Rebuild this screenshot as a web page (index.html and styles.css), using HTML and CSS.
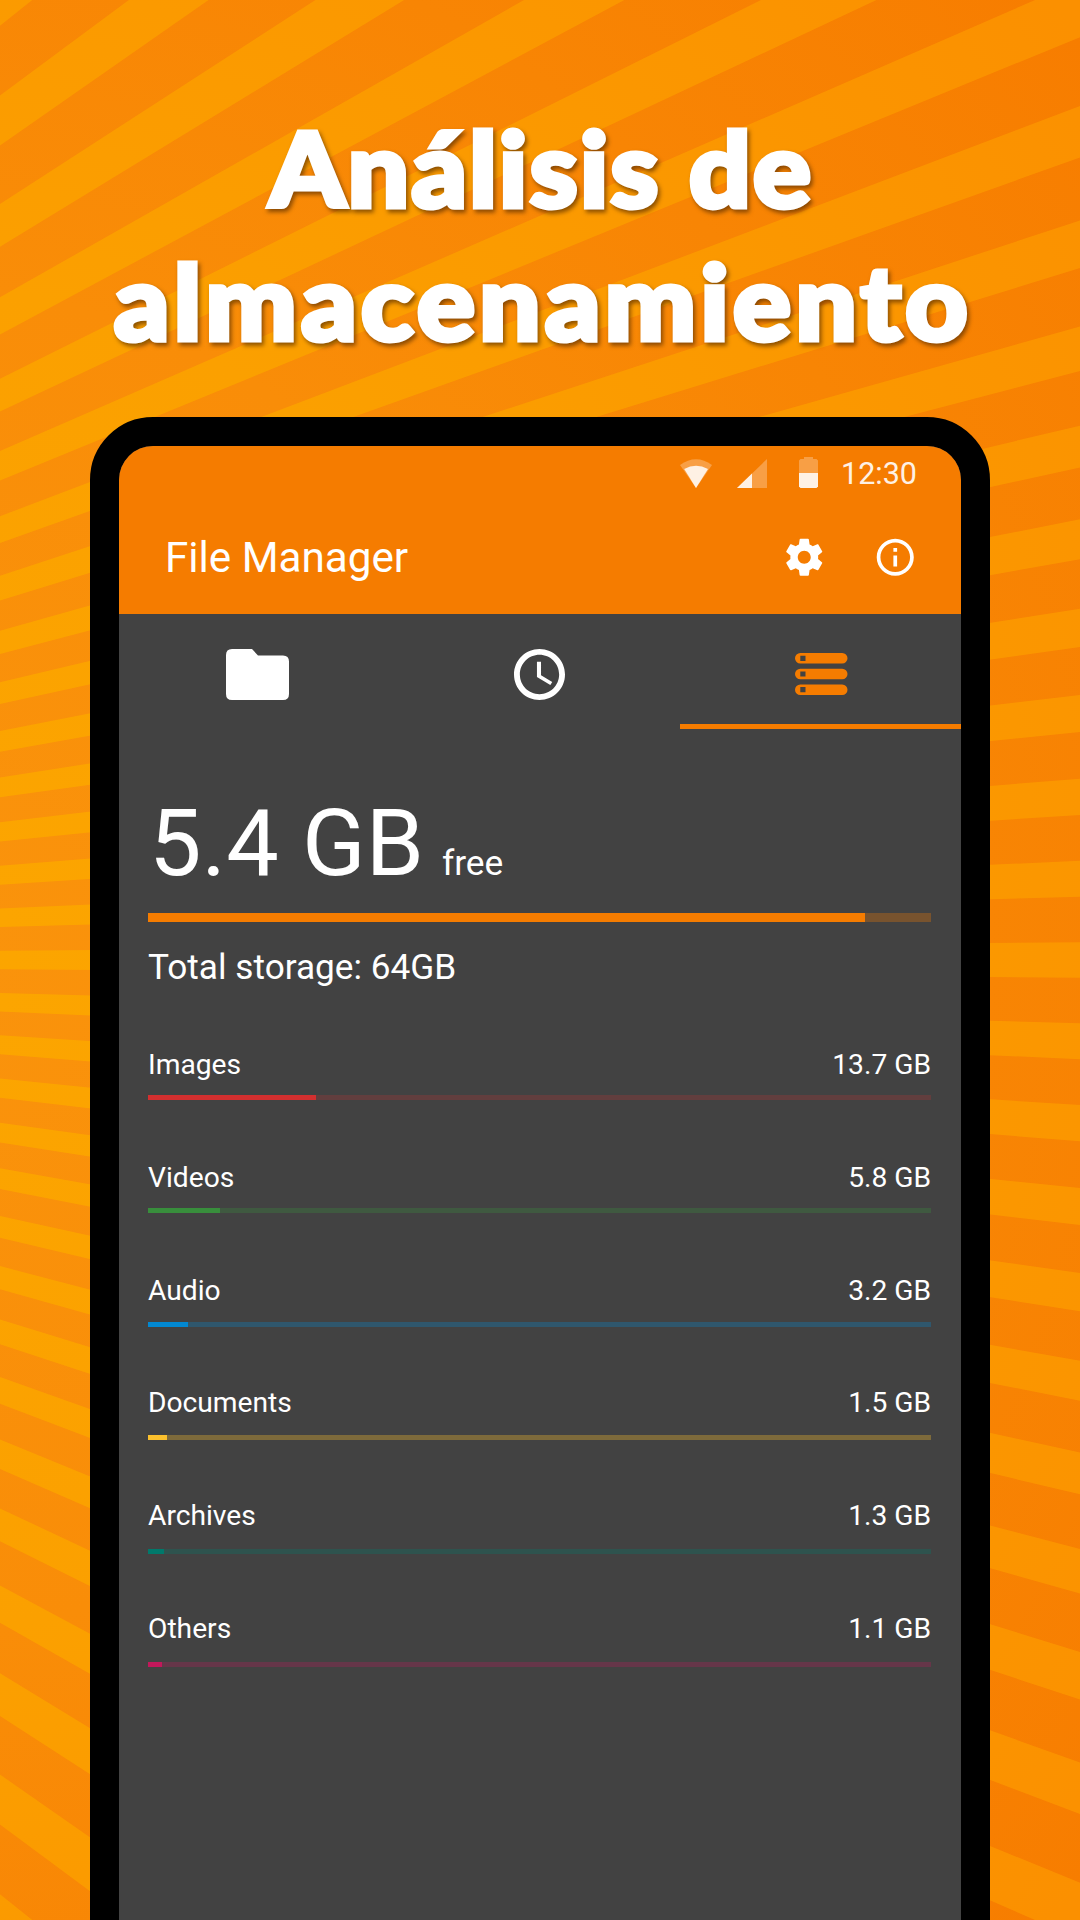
FILE: index.html
```html
<!DOCTYPE html>
<html lang="es">
<head>
<meta charset="utf-8">
<title>Análisis de almacenamiento</title>
<link rel="stylesheet" href="styles.css">
</head>
<body>
<div class="poster">
  <svg class="rays" viewBox="0 0 1080 1920" aria-hidden="true">
    <defs>
      <radialGradient id="base" gradientUnits="userSpaceOnUse" cx="-100" cy="960" r="1500">
        <stop offset="0" stop-color="#fa940c"/><stop offset=".45" stop-color="#f98d08"/><stop offset="1" stop-color="#f77d00"/>
      </radialGradient>
      <radialGradient id="light" gradientUnits="userSpaceOnUse" cx="-100" cy="960" r="1500">
        <stop offset="0" stop-color="#fca600"/><stop offset=".45" stop-color="#fba000"/><stop offset="1" stop-color="#fb9000"/>
      </radialGradient>
      <path id="ray" d="M0 0L4000 -57.6V57.6z"/>
      <g id="fan4"><use href="#ray"/><use href="#ray" transform="rotate(3.75)"/><use href="#ray" transform="rotate(7.5)"/><use href="#ray" transform="rotate(11.25)"/></g>
      <g id="fan16"><use href="#fan4"/><use href="#fan4" transform="rotate(15)"/><use href="#fan4" transform="rotate(30)"/><use href="#fan4" transform="rotate(45)"/></g>
      <mask id="burst" maskUnits="userSpaceOnUse" x="0" y="0" width="1080" height="1920">
        <g fill="#fff" transform="translate(-1168 960) scale(1.814 1)"><use href="#fan16"/><use href="#fan16" transform="rotate(-60)"/></g>
      </mask>
    </defs>
    <rect width="1080" height="1920" fill="url(#base)"/>
    <rect width="1080" height="1920" fill="url(#light)" mask="url(#burst)"/>
  </svg>

  <h1 class="headline"><span class="line line-top">Análisis de</span><span class="line line-bottom">almacenamiento</span></h1>

  <main class="phone">
    <header class="header">
      <div class="status">
        <svg class="wifi" viewBox="0 0 32 29"><path d="M0 6Q16-5.500 32 6L16 29z" opacity=".3"/><path d="M4.200 10Q16 3.500 28 10L16 29z"/></svg>
        <svg class="signal" viewBox="0 0 30 29"><path d="M30 0V29H0z" opacity=".3"/><path d="M15 14.500V29H0z"/></svg>
        <svg class="battery" viewBox="0 0 19 31"><path d="M5 0h9v2h3.500L19 3.500V16H0V3.500L1.500 2H5z" opacity=".3"/><path d="M0 16h19v13.500L17.500 31h-16L0 29.500z"/></svg>
        <span class="time">12:30</span>
      </div>
      <div class="toolbar">
        <span class="title">File Manager</span>
        <svg class="action" viewBox="0 0 24 24"><path d="M19.430 12.980c.04-.32.07-.64.07-.98s-.03-.66-.07-.98l2.110-1.650c.19-.15.24-.42.12-.64l-2-3.460c-.12-.22-.39-.3-.61-.22l-2.490 1c-.52-.4-1.080-.73-1.690-.98l-.38-2.650C14.460 2.180 14.250 2 14 2h-4c-.25 0-.46.18-.49.42l-.38 2.650c-.61.25-1.170.59-1.690.98l-2.490-1c-.23-.09-.49 0-.61.22l-2 3.460c-.13.22-.07.49.12.64l2.110 1.650c-.04.32-.07.65-.07.98s.03.66.07.98l-2.110 1.650c-.19.15-.24.42-.12.64l2 3.460c.12.22.39.3.61.22l2.490-1c.52.4 1.080.73 1.690.98l.38 2.650c.03.24.24.42.49.42h4c.25 0 .46-.18.49-.42l.38-2.650c.61-.25 1.170-.59 1.690-.98l2.490 1c.23.09.49 0 .61-.22l2-3.460c.12-.22.07-.49-.12-.64zM12 15.500c-1.930 0-3.500-1.570-3.500-3.500s1.570-3.500 3.500-3.500 3.500 1.570 3.500 3.500-1.570 3.500-3.500 3.500z"/></svg>
        <svg class="action" viewBox="0 0 24 24"><path d="M11 17h2v-6h-2zm1-15C6.480 2 2 6.480 2 12s4.480 10 10 10 10-4.480 10-10S17.520 2 12 2zm0 18c-4.410 0-8-3.590-8-8s3.590-8 8-8 8 3.590 8 8-3.590 8-8 8zM11 9h2V7h-2z"/></svg>
      </div>
    </header>

    <nav class="tabs">
      <div class="tab"><svg class="folder" viewBox="0 0 63 51"><path d="M6 0H26L32 6.500H57Q63 6.500 63 12.500V45Q63 51 57 51H6Q0 51 0 45V6Q0 0 6 0z"/></svg></div>
      <div class="tab"><svg class="clock" viewBox="2 2 20 20"><path d="M11.990 2C6.470 2 2 6.480 2 12s4.470 10 9.990 10C17.520 22 22 17.520 22 12S17.520 2 11.990 2zM12 19.700c-4.250 0-7.700-3.450-7.700-7.700s3.450-7.700 7.700-7.700 7.700 3.450 7.700 7.700-3.450 7.700-7.700 7.700zM12.600 7H11v6l5.250 3.150.75-1.230-4.400-2.620z"/></svg></div>
      <div class="tab active"><svg class="disks" viewBox="0 0 52.500 42"><path fill-rule="evenodd" d="M5.300 0H47.200A5.300 5.300 0 0 1 47.200 10.600H5.300A5.300 5.300 0 0 1 5.300 0zM5.300 2.700V7.900H10.500V2.700zM5.300 15.700H47.200A5.300 5.300 0 0 1 47.200 26.300H5.300A5.300 5.300 0 0 1 5.300 15.700zM5.300 18.400V23.600H10.500V18.400zM5.300 31.400H47.200A5.300 5.300 0 0 1 47.200 42H5.300A5.300 5.300 0 0 1 5.300 31.400zM5.300 34.100V39.300H10.500V34.100z"/></svg></div>
    </nav>

    <section class="storage">
      <div class="free"><span class="amount">5.4 GB</span><span class="unit">free</span></div>
      <div class="bar total-bar orange"><div class="fill" style="width:91.6%"></div></div>
      <div class="total">Total storage: 64GB</div>
      <ul class="categories">
        <li class="category"><div class="label"><span>Images</span><span>13.7 GB</span></div><div class="bar red"><div class="fill" style="width:21.5%"></div></div></li>
        <li class="category"><div class="label"><span>Videos</span><span>5.8 GB</span></div><div class="bar green"><div class="fill" style="width:9.2%"></div></div></li>
        <li class="category"><div class="label"><span>Audio</span><span>3.2 GB</span></div><div class="bar blue"><div class="fill" style="width:5.1%"></div></div></li>
        <li class="category"><div class="label"><span>Documents</span><span>1.5 GB</span></div><div class="bar yellow"><div class="fill" style="width:2.4%"></div></div></li>
        <li class="category"><div class="label"><span>Archives</span><span>1.3 GB</span></div><div class="bar teal"><div class="fill" style="width:2.05%"></div></div></li>
        <li class="category"><div class="label"><span>Others</span><span>1.1 GB</span></div><div class="bar pink"><div class="fill" style="width:1.8%"></div></div></li>
      </ul>
    </section>
  </main>
</div>
</body>
</html>
```
FILE: styles.css
```css
* { box-sizing: border-box; margin: 0; padding: 0; }
body { width: 1080px; height: 1920px; overflow: hidden; font-family: Roboto, "Liberation Sans", sans-serif; color: #fff; }
svg { display: block; fill: currentColor; flex: none; }

.poster { position: relative; height: 1920px; overflow: hidden; display: flex; flex-direction: column; align-items: center; }
.rays { position: absolute; inset: 0; width: 1080px; height: 1920px; }

.headline { position: relative; height: 417px; flex: none; padding-top: 101px; font: 900 102px/133px Lato, sans-serif; text-align: center; -webkit-text-stroke: 5px #fff; paint-order: stroke fill; transform: scaleX(1.06); filter: drop-shadow(2px 3px 2px rgba(80, 40, 0, .65)); }
.line { display: block; white-space: nowrap; }
.line-top { letter-spacing: 2.300px; padding-left: 3px; }
.line-bottom { letter-spacing: 4.200px; padding-left: 6px; }

.phone { position: relative; width: 900px; height: 1600px; flex: none; border: 29px solid #000; border-radius: 63px; background: #424242; overflow: hidden; display: flex; flex-direction: column; }

.header { height: 168px; flex: none; background: #f57c00; }
.status { height: 55px; display: flex; align-items: center; justify-content: flex-end; padding-right: 44px; color: #fef1e4; }
.wifi { width: 32px; height: 29px; margin-right: 25px; }
.signal { width: 30px; height: 29px; margin-right: 32px; }
.battery { width: 19px; height: 31px; margin-right: 23px; margin-top: -2px; }
.time { font-size: 30.500px; }
.toolbar { height: 113px; display: flex; align-items: center; padding: 0 43.500px 1px 46px; }
.title { font-size: 42.200px; flex: 1; }
.action { width: 44.500px; height: 44.500px; margin-left: 47px; }

.tabs { height: 115px; flex: none; display: grid; grid-template-columns: repeat(3, 1fr); }
.tab { display: flex; align-items: center; justify-content: center; padding-top: 10px; border-bottom: 5px solid transparent; }
.tab.active { color: #f57c00; border-color: #f57c00; }
.folder { width: 63px; height: 51px; margin-right: 4px; }
.clock { width: 51px; height: 51px; }
.disks { width: 52.500px; height: 42px; margin-left: 2px; }

.storage { padding: 59px 30px 0 29px; }
.free { height: 125px; display: flex; align-items: baseline; padding-left: 1px; line-height: 110px; }
.amount { font-size: 93.500px; }
.unit { font-size: 35.300px; margin-left: 18px; }
.bar { height: 5px; background: color-mix(in srgb, var(--tone) var(--mix, 22%), #424242); }
.fill { height: 100%; background: var(--tone); }
.total-bar { height: 9px; }
.total { height: 64.600px; padding-top: 24px; font-size: 35.200px; line-height: 42px; }
.categories { list-style: none; }
.category { height: 113.400px; display: flex; flex-direction: column; justify-content: flex-end; }
.label { display: flex; justify-content: space-between; font-size: 28.200px; line-height: 34px; padding-bottom: 13px; }
.category:nth-child(3) .label { padding-bottom: 14px; }
.category:nth-child(4) .label { padding-bottom: 15px; }
.category:nth-child(n+5) .label { padding-bottom: 16px; }

.orange { --tone: #f57c00; --mix: 30%; }
.red { --tone: #d32f2f; }
.green { --tone: #388e3c; --mix: 30%; }
.blue { --tone: #0288d1; --mix: 30%; }
.yellow { --tone: #fbc02d; --mix: 32%; }
.teal { --tone: #00796b; --mix: 30%; }
.pink { --tone: #c2185b; --mix: 28%; }
```
